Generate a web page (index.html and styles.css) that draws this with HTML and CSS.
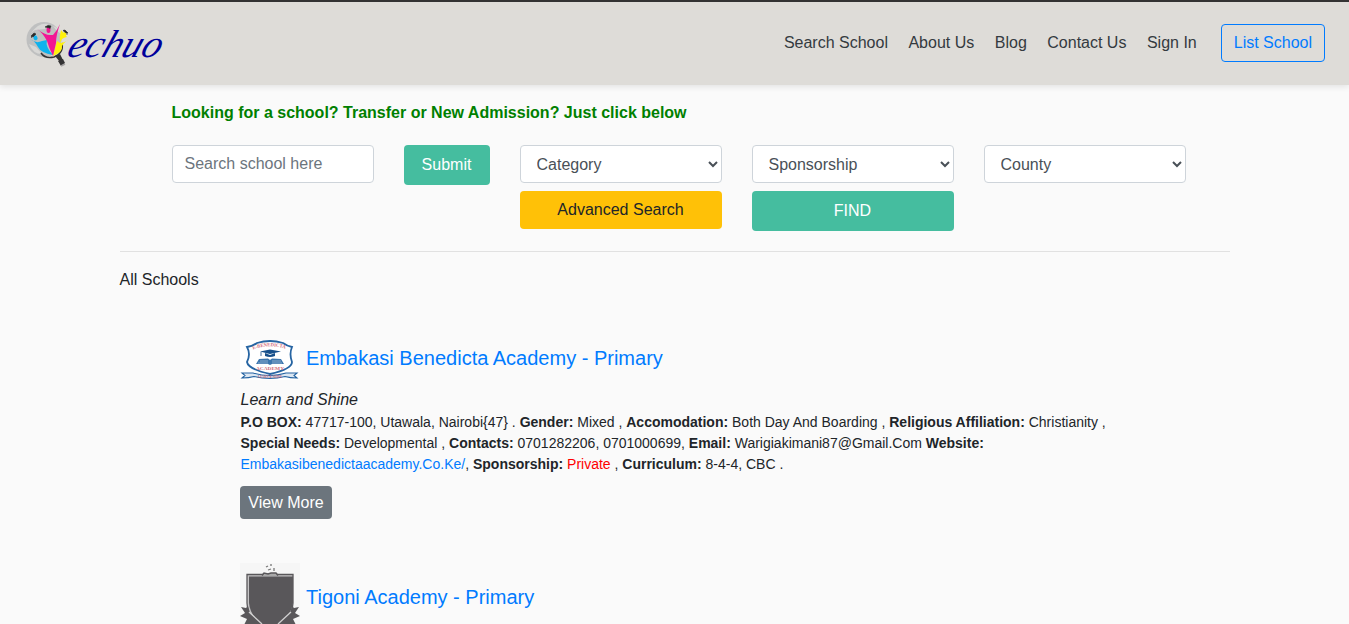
FILE: index.html
```html
<!DOCTYPE html>
<html lang="en">
<head>
<meta charset="utf-8">
<title>Techuo - Schools</title>
<link rel="stylesheet" href="styles.css">
</head>
<body>
<header class="navbar">
  <a class="brand" href="#" aria-label="Techuo">
    <svg width="142" height="52" viewBox="0 0 142 52">
      <circle cx="19" cy="20.500" r="17.500" fill="#bfc0c0"/>
      <path d="M6 14Q14 3 23 5L20 10L10 11ZM4 25L11 28L17 35Q8 35 4 25ZM28 7Q34 9 36 15L32 12Z" fill="#d8d8d6"/>
      <path d="M16 34Q20 40 29 38Q39 34 37 24" fill="none" stroke="#343334" stroke-width="1.500"/>
      <path d="M30 37L35 35L38 41L35 43ZM33 42L38 40L40 44L36 47Z" fill="#343334"/>
      <path d="M36 47L40 45" stroke="#a3a1a1" stroke-width="1.500"/>
      <path d="M5 20Q11 25 17 22L22 21Q20 28 28 36Q16 34 13 28Q10 22 5 20Z" fill="#0eb2ed"/>
      <path d="M44 21Q38 24 35 24L32 22L28 37Q38 33 37 27Q40 22 44 21Z" fill="#fff10c"/>
      <path d="M36 11Q34 18 35 24L37 20Q40 18 42 18Z" fill="#fff10c"/>
      <path d="M12 10Q20 16 25 16L28 16Q32 12 35 5Q31 16 31 24L28 37Q24 29 22 22Q18 14 12 10Z" fill="#f31594"/>
      <ellipse cx="23.500" cy="11" rx="2" ry="3" fill="#f31594"/>
      <ellipse cx="10.500" cy="19" rx="2" ry="2.500" fill="#0eb2ed" transform="rotate(-25 10 19)"/>
      <ellipse cx="39.500" cy="15.500" rx="2" ry="2.500" fill="#fff10c" transform="rotate(20 39 15)"/>
      <path d="M20 8L23 6.500L26 7L25 9ZM6 17L9 14L11 15L8 18ZM38 11.500L40 11L43 14L41 14ZM25 8V10M42 14V16M6.500 17V19" fill="#292929" stroke="#292929" stroke-width=".6"/>
      <text class="wordmark" x="0" y="0" textLength="93" lengthAdjust="spacingAndGlyphs" transform="translate(40.500 37.500) skewX(-20)">echuo</text>
    </svg>
  </a>
  <nav class="links">
    <a href="#">Search School</a><a href="#">About Us</a><a href="#">Blog</a><a href="#">Contact Us</a><a href="#">Sign In</a>
  </nav>
  <a class="btn outline" href="#">List School</a>
</header>
<main class="container">
  <section class="search">
    <h1>Looking for a school? Transfer or New Admission? Just click below</h1>
    <form class="filters">
      <input class="control" type="text" placeholder="Search school here">
      <button class="btn green" type="button">Submit</button>
      <div class="stack">
        <select class="control"><option>Category</option></select>
        <button class="btn yellow" type="button">Advanced Search</button>
      </div>
      <div class="stack">
        <select class="control"><option>Sponsorship</option></select>
        <button class="btn green" type="button">FIND</button>
      </div>
      <select class="control"><option>County</option></select>
    </form>
  </section>
  <p class="all">All Schools</p>
  <section class="schools">
    <article class="school">
      <h2>
        <svg width="60" height="44" viewBox="0 0 60 44">
          <path d="M0 2H60V42H0Z" fill="#fff"/>
          <path d="M7 9Q13 8 17 5Q30 1 43 5Q47 8 52 9Q49 16 52 24Q52 31 30 36Q8 31 7 24Q11 16 7 9Z" fill="#fff" stroke="#2765a3" stroke-width="1.800"/>
          <path id="arc" d="M13 11.500Q30 5 48 11.500" fill="none"/>
          <text class="crest-text"><textPath href="#arc" textLength="33" lengthAdjust="spacingAndGlyphs">E-BENEDICTA</textPath></text>
          <path d="M20 13.500L30 11.500L41 13.500L30 16ZM25 15V18Q30 20 35 18V15L30 17Z" fill="#164f8b"/>
          <path d="M21 14V18" stroke="#164f8b" stroke-width=".8"/>
          <path d="M19 21L28 20.500L30 22L32 20.500L41 21L44 26H32L30 27L28 26H16Z" fill="#3c76ae"/>
          <path d="M20 23H28M32 23H41M18 25H28M32 25H42" stroke="#9eb8d2" stroke-width=".8"/>
          <text class="crest-text" x="16" y="31.500" textLength="28" lengthAdjust="spacingAndGlyphs">ACADEMY</text>
          <path d="M2 35H13Q30 40 46 35H57L54 37.500L57 40Q50 40 45 38.500Q30 42.500 14 38.500Q9 40 2 40L5 37.500Z" fill="#dce7f2" stroke="#2765a3" stroke-width="1.100"/>
          <text class="crest-motto" x="18" y="39.800" textLength="24" lengthAdjust="spacingAndGlyphs">LEARN &amp; SHINE</text>
        </svg>
        <a href="#">Embakasi Benedicta Academy - Primary</a>
      </h2>
      <em class="motto">Learn and Shine</em>
      <p class="details"><b>P.O BOX:</b> 47717-100, Utawala, Nairobi{47} . <b>Gender:</b> Mixed , <b>Accomodation:</b> Both Day And Boarding , <b>Religious Affiliation:</b> Christianity , <b>Special Needs:</b> Developmental , <b>Contacts:</b> 0701282206, 0701000699, <b>Email:</b> Warigiakimani87@Gmail.Com <b>Website:</b> <a href="#">Embakasibenedictaacademy.Co.Ke/</a>, <b>Sponsorship:</b> <span class="private">Private</span> , <b>Curriculum:</b> 8-4-4, CBC .</p>
      <button class="btn more" type="button">View More</button>
    </article>
    <article class="school">
      <h2>
        <svg width="60" height="68" viewBox="0 0 60 68">
          <path d="M0 0H60V68H0Z" fill="#f6f6f6"/>
          <path d="M7 11.500H53V40Q53 53 38 64H22Q7 53 7 40Z" fill="#c4c3c4" stroke="#59575a" stroke-width="1.300"/>
          <path d="M9 13.500H53V40Q51 53 37 64H24Q10 53 9 40Z" fill="#59575a"/>
          <path d="M22 12.500L24 10L28 11L31 10L36 10L38 12.500" stroke="#59575a" stroke-width="1.500" fill="#aaa"/>
          <path d="M26 4L28 3M28 7L31 6M31 1V3M34 5V8" stroke="#777" stroke-width="1.300"/>
          <path d="M1 44L6 45L8 43L10 50L14 54L21 61L19 67L12 61L4 62L7 56L0 53L5 50ZM59 44L54 45L52 43L50 50L46 54L39 61L41 67L48 61L56 62L53 56L60 53L55 50Z" fill="#59575a"/>
          <path d="M9 49L22 61M51 49L38 61" stroke="#cfcfcf" stroke-width="1.300"/>
        </svg>
        <a href="#">Tigoni Academy - Primary</a>
      </h2>
    </article>
  </section>
</main>
</body>
</html>
```
FILE: styles.css
```css
* { box-sizing: border-box; }
html { height: 100%; overflow: hidden; }
body { height: 100%; margin: 0; overflow: hidden; background: #fafafa; color: #212529; font: 16px/24px "Liberation Sans", Arial, sans-serif; }
a { color: #007bff; text-decoration: none; }
.navbar { display: flex; align-items: flex-start; height: 85px; padding: 22px 24px 0; border-top: 2px solid #333; background: #dedcd8; box-shadow: 0 2px 6px #00000018; }
.brand { display: block; margin: -5px auto 0 1px; height: 52px; }
.brand svg { overflow: visible; }
.wordmark { fill: #00009b; font: italic 39px "Liberation Serif", serif; }
.links { display: flex; gap: 20.500px; padding-top: 7px; margin-right: 24px; }
.links a { color: #343a40; }
.btn { border: 1px solid transparent; border-radius: 4px; height: 38px; padding: 0 12px; font: 16px/24px "Liberation Sans", Arial, sans-serif; }
.outline { padding-top: 6px; border-color: #007bff; }
.container { width: 1110px; margin: 0 0 0 119.500px; }
.search { height: 167px; padding: 16px 0 0 52px; border-bottom: 1px solid #e1e1e1; }
h1 { margin: 0 0 20px; color: #008000; font-size: 16px; line-height: 24px; }
.filters { display: grid; grid-template-columns: 202px 86px 202px 202px 202px; gap: 30px; align-items: start; }
.stack { display: grid; gap: 8px; }
.control { width: 100%; height: 38px; margin: 0; padding: 6px 12px; border: 1px solid #ced4da; border-radius: 4px; background-color: #fff; color: #495057; font: 16px/24px "Liberation Sans", Arial, sans-serif; }
input.control { padding-bottom: 7px; }
.control::placeholder { color: #6c757d; opacity: 1; }
.green { height: 40px; background: #45bd9f; color: #fff; }
.yellow { background: #ffc107; color: #212529; }
.all { margin: 16px 0 44px; }
.schools { width: 888px; margin-left: 121px; }
.school { margin-bottom: 44px; }
h2 { display: flex; align-items: center; gap: 6px; margin: 0 0 8px; font-size: 20px; line-height: 24px; font-weight: 400; }
h2 svg { margin-left: -.5px; }
.school:first-child h2 { height: 44px; }
.school:first-child h2 svg { margin-top: 4px; }
.crest-text { fill: #d26b78; font: bold 5px "Liberation Serif", serif; }
.crest-motto { fill: #b65d74; font: bold 3.500px "Liberation Serif", serif; }
.motto { display: block; }
.details { margin: 0 0 11px; font-size: 14px; line-height: 21px; }
.private { color: red; }
.more { width: 92px; height: 33px; margin-left: -.5px; padding: 0 7px; background: #6c757d; color: #fff; }
```
